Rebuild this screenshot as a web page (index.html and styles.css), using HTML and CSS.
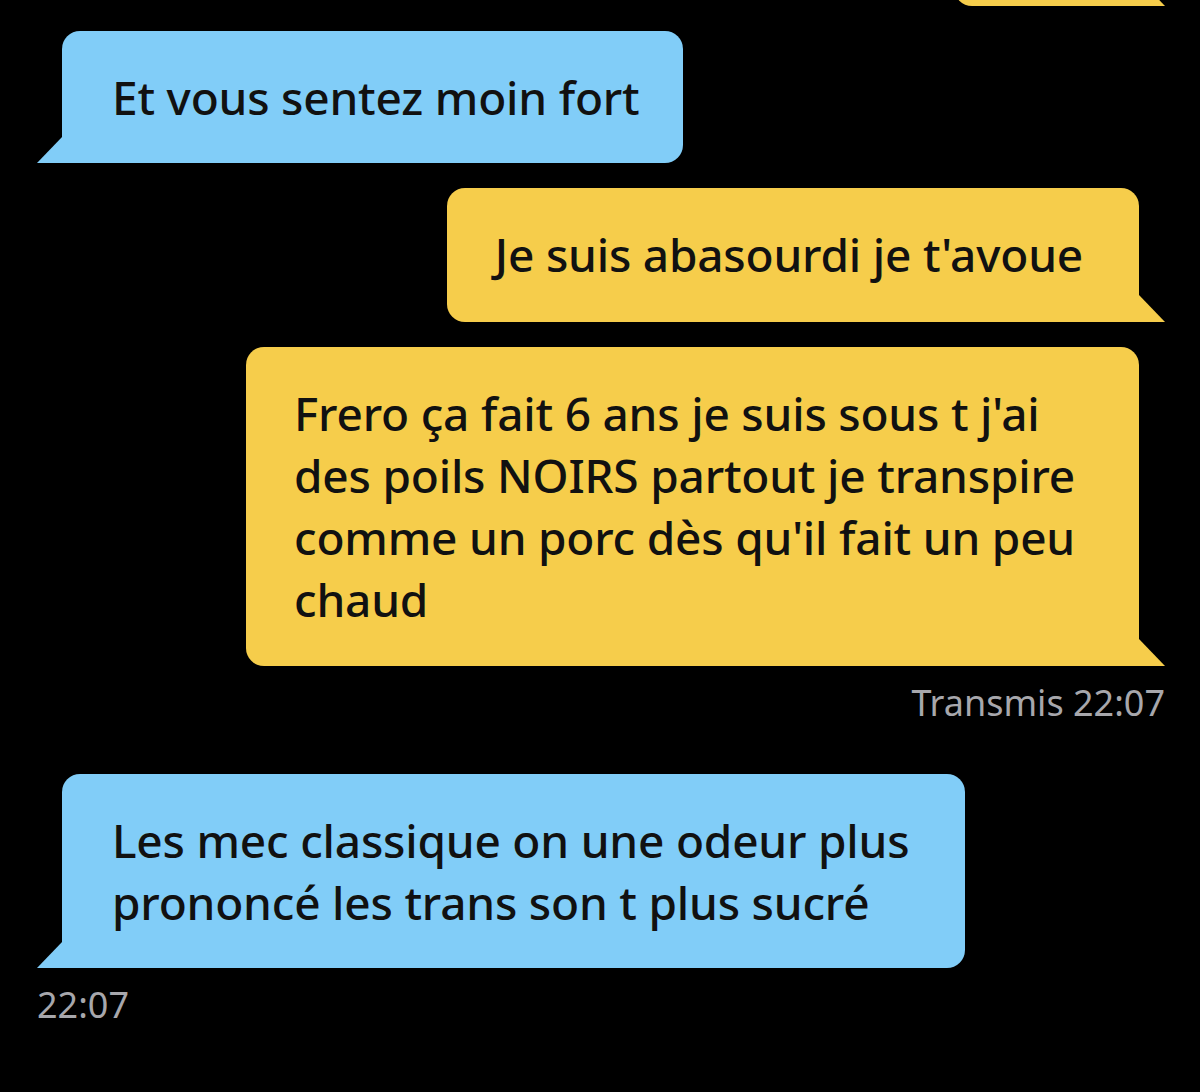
FILE: index.html
```html
<!DOCTYPE html>
<html lang="fr">
<head>
    <meta charset="UTF-8">
    <meta name="viewport" content="width=device-width, initial-scale=1.0">
    <title>Messages</title>
    <link rel="stylesheet" href="styles.css">
</head>
<body>
    <div class="chat">
        <div class="bubble sent cut"></div>

        <div class="bubble received">Et vous sentez moin fort</div>

        <div class="bubble sent tall">Je suis abasourdi je t'avoue</div>
        <div class="bubble sent wide">Frero ça fait 6 ans je suis sous t j'ai<br>des poils NOIRS partout je transpire<br>comme un porc dès qu'il fait un peu<br>chaud</div>
        <div class="meta meta-right">Transmis 22:07</div>

        <div class="bubble received wide">Les mec classique on une odeur plus<br>prononcé les trans son t plus sucré</div>
        <div class="meta meta-left">22:07</div>
    </div>
</body>
</html>
```

FILE: styles.css
```css
body {
    margin: 0;
    background-color: #000;
    font-family: 'Noto Sans', 'Open Sans', sans-serif;
    height: 1092px;
    overflow: hidden;
}
.chat {
    display: flex;
    flex-direction: column;
    gap: 25px;
    padding: 0 35px 0 37px;
}
.bubble {
    position: relative;
    padding: 35px 44px 35px 50px;
    font-size: 46px;
    font-weight: 500;
    line-height: 62px;
    letter-spacing: -0.2px;
    color: #111;
    border-radius: 18px;
    white-space: nowrap;
}
.bubble::after {
    content: "";
    position: absolute;
    bottom: 0;
    width: 26px;
    height: 27px;
}
.received {
    align-self: flex-start;
    margin-left: 25px;
    background-color: #81cdf8;
    border-bottom-left-radius: 0;
}
.received::after {
    left: -25px;
    background-color: #81cdf8;
    clip-path: polygon(100% 0, 100% 100%, 0 100%);
}
.sent {
    align-self: flex-end;
    margin-right: 26px;
    padding-left: 48px;
    padding-right: 56px;
    background-color: #f6cd4b;
    border-bottom-right-radius: 0;
}
.sent::after {
    right: -26px;
    background-color: #f6cd4b;
    clip-path: polygon(0 0, 100% 100%, 0 100%);
}
.tall {
    padding-bottom: 37px;
}
.received.wide {
    padding-right: 56px;
}
.sent.wide {
    padding-right: 64px;
    padding-bottom: 36px;
}
.cut {
    width: 185px;
    height: 60px;
    padding: 0;
    margin-top: -54px;
}
.meta {
    font-size: 36px;
    color: #a7a7ac;
    line-height: 36px;
}
.meta-right {
    align-self: flex-end;
    margin-top: -6px;
    margin-bottom: 28px;
}
.meta-left {
    margin-top: -6px;
}
```
